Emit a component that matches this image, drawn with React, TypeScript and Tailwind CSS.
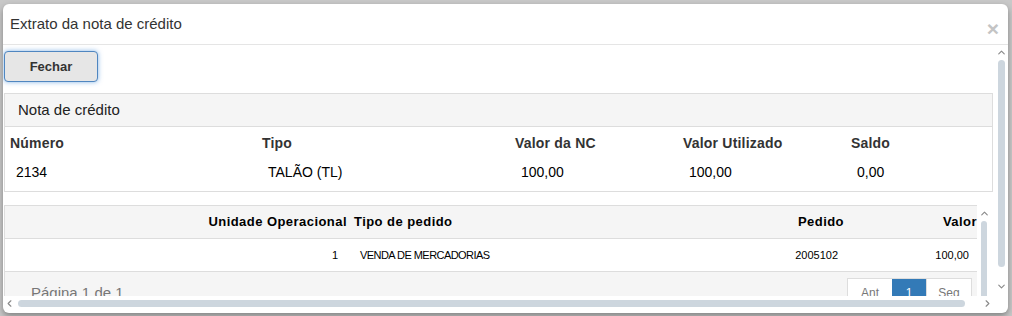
import { ChevronUp, ChevronDown, ChevronLeft, ChevronRight } from "lucide-react";

const resumo = [
  { label: "Número", value: "2134" },
  { label: "Tipo", value: "TALÃO (TL)" },
  { label: "Valor da NC", value: "100,00" },
  { label: "Valor Utilizado", value: "100,00" },
  { label: "Saldo", value: "0,00" },
];

const pedidos = [{ unidade: "1", tipo: "VENDA DE MERCADORIAS", pedido: "2005102", valor: "100,00" }];

export default function App() {
  return (
    <div
      className="h-[316px] w-[1012px] overflow-hidden bg-[#c8c8c8] pl-[3px] pt-[4px]"
      style={{ fontFamily: '"Liberation Sans", Arial, sans-serif' }}
    >
      <div className="flex h-[309px] w-[1005px] flex-col overflow-hidden rounded-[6px] bg-white shadow-[0_3px_6px_rgba(0,0,0,0.35)]">
        {/* Cabeçalho do modal */}
        <div className="flex h-[41px] shrink-0 items-center justify-between border-b border-[#e5e5e5] pl-[7px] pr-[9px]">
          <span className="text-[15px] text-[#333]">Extrato da nota de crédito</span>
          <span className="mt-[8px] text-[21px] font-bold leading-none text-[#c4c4c4]">×</span>
        </div>

        {/* Corpo com rolagem */}
        <div className="flex h-[251px] shrink-0">
          <div className="w-[992px] overflow-hidden pl-[1px] pt-[6px]">
            <button className="h-[31px] w-[94px] rounded-[4px] border border-[#4f86c0] bg-[#e6e6e6] text-[13px] font-bold text-[#333] shadow-[0_0_5px_rgba(82,150,220,0.7)]">
              Fechar
            </button>

            {/* Painel nota de crédito */}
            <div className="mt-[11px] w-[989px] border border-[#dddddd]">
              <div className="flex h-[33px] items-center border-b border-[#dddddd] bg-[#f5f5f5] pl-[13px] text-[15px] text-[#222]">
                Nota de crédito
              </div>
              <div className="grid h-[64px] grid-cols-[252px_253px_168px_168px_1fr] pl-[5px] pt-[7px]">
                {resumo.map((r) => (
                  <div key={r.label} className="flex flex-col">
                    <span className="h-[18px] text-[14px] font-bold leading-[18px] tracking-[0.2px] text-[#333]">{r.label}</span>
                    <span className="mt-[11px] pl-[6px] text-[14px] leading-[18px] text-black">{r.value}</span>
                  </div>
                ))}
              </div>
            </div>

            {/* Tabela de pedidos */}
            <div className="mt-[13px] flex h-[120px]">
              <div className="w-[973px] border-l border-[#dddddd]">
                <div className="flex h-[34px] items-center border-y border-[#dddddd] bg-[#f5f5f5] text-[13px] font-bold tracking-[0.45px] text-black">
                  <div className="w-[345px] pr-[3px] text-right">Unidade Operacional</div>
                  <div className="w-[351px] pl-[4px]">Tipo de pedido</div>
                  <div className="w-[148px] pr-[5px] text-right">Pedido</div>
                  <div className="flex-1 text-right">Valor</div>
                </div>
                {pedidos.map((p) => (
                  <div key={p.pedido} className="flex h-[33px] items-center border-b border-[#dddddd] text-[11px] text-black">
                    <div className="w-[345px] pr-[12px] text-right">{p.unidade}</div>
                    <div className="w-[351px] pl-[10px] tracking-[-0.55px]">{p.tipo}</div>
                    <div className="w-[148px] pr-[11px] text-right">{p.pedido}</div>
                    <div className="flex-1 pr-[8px] text-right">{p.valor}</div>
                  </div>
                ))}
                <div className="flex h-[60px] items-start justify-between bg-[#f5f5f5] pl-[26px] pr-[5px]">
                  <span className="mt-[11px] text-[15px] leading-[20px] text-[#777]">Página 1 de 1</span>
                  <div className="mt-[6px] flex h-[30px] border border-[#dddddd] text-[12px] text-[#777]">
                    <span className="flex w-[44px] items-center justify-center bg-white">Ant</span>
                    <span className="flex w-[34px] items-center justify-center bg-[#337ab7] text-white">1</span>
                    <span className="flex w-[45px] items-center justify-center border-l border-[#dddddd] bg-white">Seg</span>
                  </div>
                </div>
              </div>
              {/* Barra vertical da tabela */}
              <div className="flex w-[14px] flex-col items-center bg-white">
                <ChevronUp size={11} strokeWidth={2.5} className="mt-[3px] shrink-0 text-[#8a8a8a]" />
                <div className="mt-[2px] h-[80px] w-[6px] rounded-full bg-[#cdd6de]" />
              </div>
            </div>
          </div>

          {/* Barra vertical externa */}
          <div className="flex w-[13px] flex-col items-center">
            <ChevronUp size={11} strokeWidth={2.5} className="mt-[2px] shrink-0 text-[#8a8a8a]" />
            <div className="mt-[2px] h-[207px] w-[7px] rounded-full bg-[#cdd6de]" />
            <ChevronDown size={11} strokeWidth={2.5} className="mt-[14px] shrink-0 text-[#8a8a8a]" />
          </div>
        </div>

        {/* Barra horizontal */}
        <div className="flex h-[15px] shrink-0 items-center">
          <ChevronLeft size={11} strokeWidth={2.5} className="ml-[1px] shrink-0 text-[#8a8a8a]" />
          <div className="ml-[3px] h-[7px] w-[947px] rounded-full bg-[#cdd6de]" />
          <ChevronRight size={11} strokeWidth={2.5} className="ml-[17px] shrink-0 text-[#8a8a8a]" />
        </div>
      </div>
    </div>
  );
}
